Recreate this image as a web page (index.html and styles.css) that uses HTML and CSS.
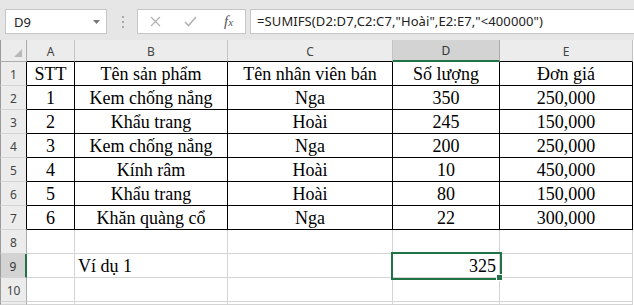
FILE: index.html
```html
<!DOCTYPE html>
<html lang="vi">
<head>
    <meta charset="UTF-8">
    <title>SUMIFS - Ví dụ 1</title>
    <link rel="stylesheet" href="styles.css">
</head>
<body>

    <!-- Name box + formula bar -->
    <div class="formula-bar">
        <div class="name-box">
            <span>D9</span>
            <svg width="7" height="4" viewBox="0 0 7 4"><path d="M0 0H7L3.5 4Z" fill="#777"/></svg>
        </div>
        <div class="grip"><i></i><i></i><i></i></div>
        <div class="fx-box">
            <span class="fx-btn">
                <svg width="11" height="11" viewBox="0 0 11 11"><path d="M1 1L10 10M10 1L1 10" stroke="#b3b3b3" stroke-width="1.3" fill="none"/></svg>
            </span>
            <span class="fx-btn">
                <svg width="13" height="11" viewBox="0 0 13 11"><path d="M1 6L4.5 9.5L12 1" stroke="#b3b3b3" stroke-width="1.6" fill="none"/></svg>
            </span>
            <span class="fx-btn fx-label">f<sub>x</sub></span>
        </div>
        <div class="formula-input">=SUMIFS(D2:D7,C2:C7,"Hoài",E2:E7,"&lt;400000")</div>
    </div>

    <!-- Sheet grid -->
    <div class="sheet">
        <div class="corner">
            <svg width="8" height="8" viewBox="0 0 8 8"><path d="M8 0V8H0Z" fill="#b9b9b9"/></svg>
        </div>
        <div class="hd">A</div>
        <div class="hd">B</div>
        <div class="hd">C</div>
        <div class="hd on">D</div>
        <div class="hd">E</div>

        <div class="rh t">1</div>
        <div class="c t">STT</div>
        <div class="c t">Tên sản phẩm</div>
        <div class="c t">Tên nhân viên bán</div>
        <div class="c t">Số lượng</div>
        <div class="c t">Đơn giá</div>

        <div class="rh t">2</div>
        <div class="c t">1</div>
        <div class="c t">Kem chống nắng</div>
        <div class="c t">Nga</div>
        <div class="c t">350</div>
        <div class="c t">250,000</div>

        <div class="rh t">3</div>
        <div class="c t">2</div>
        <div class="c t">Khẩu trang</div>
        <div class="c t">Hoài</div>
        <div class="c t">245</div>
        <div class="c t">150,000</div>

        <div class="rh t">4</div>
        <div class="c t">3</div>
        <div class="c t">Kem chống nắng</div>
        <div class="c t">Nga</div>
        <div class="c t">200</div>
        <div class="c t">250,000</div>

        <div class="rh t">5</div>
        <div class="c t">4</div>
        <div class="c t">Kính râm</div>
        <div class="c t">Hoài</div>
        <div class="c t">10</div>
        <div class="c t">450,000</div>

        <div class="rh t">6</div>
        <div class="c t">5</div>
        <div class="c t">Khẩu trang</div>
        <div class="c t">Hoài</div>
        <div class="c t">80</div>
        <div class="c t">150,000</div>

        <div class="rh t">7</div>
        <div class="c t">6</div>
        <div class="c t">Khăn quàng cổ</div>
        <div class="c t">Nga</div>
        <div class="c t">22</div>
        <div class="c t">300,000</div>

        <div class="rh">8</div>
        <div class="c"></div>
        <div class="c"></div>
        <div class="c"></div>
        <div class="c"></div>
        <div class="c"></div>

        <div class="rh on">9</div>
        <div class="c"></div>
        <div class="c left">Ví dụ 1</div>
        <div class="c"></div>
        <div class="c right sel">325</div>
        <div class="c"></div>

        <div class="rh">10</div>
        <div class="c"></div>
        <div class="c"></div>
        <div class="c"></div>
        <div class="c"></div>
        <div class="c"></div>

        <!-- row 11, only its top edge shows -->
        <div class="rh"></div>
        <div class="c"></div>
        <div class="c"></div>
        <div class="c"></div>
        <div class="c"></div>
        <div class="c"></div>
    </div>

</body>
</html>
```

FILE: styles.css
```css
/* Page */
body {
    margin: 0;
    width: 634px;
    height: 305px;
    overflow: hidden;
    background: #fff;
    font-family: "Noto Sans", "Open Sans", sans-serif;
}

/* Formula bar */
.formula-bar {
    display: flex;
    align-items: center;
    height: 40px;
    box-sizing: border-box;
    padding: 9px 0 6px 5px;
    background: #e6e6e6;
    overflow: hidden;
}

.name-box {
    display: flex;
    align-items: center;
    justify-content: space-between;
    width: 102px;
    height: 25px;
    box-sizing: border-box;
    padding: 0 6px 0 8px;
    background: #fff;
    border: 1px solid #c6c6c6;
    font-size: 13px;
    color: #222;
}

.grip {
    display: flex;
    flex-direction: column;
    gap: 3px;
    margin: 0 13px 0 15px;
}

.grip i {
    display: block;
    width: 2px;
    height: 2px;
    background: #aaa;
}

.fx-box {
    display: flex;
    align-items: center;
    width: 109px;
    height: 25px;
    box-sizing: border-box;
    background: #fff;
    border: 1px solid #c6c6c6;
}

.fx-btn {
    display: flex;
    align-items: center;
    justify-content: center;
    width: 36px;
    height: 100%;
}

.fx-label {
    width: 38px;
    padding-left: 4px;
    box-sizing: border-box;
    font-family: "Liberation Serif", serif;
    font-style: italic;
    font-size: 15px;
    color: #555;
}

.fx-label sub {
    font-size: 11px;
    vertical-align: -1px;
}

.formula-input {
    flex: 1;
    height: 25px;
    box-sizing: border-box;
    margin-left: 4px;
    margin-right: -4px;
    padding-left: 6px;
    background: #fff;
    border: 1px solid #c6c6c6;
    font-size: 13px;
    letter-spacing: 0.1px;
    line-height: 23px;
    color: #222;
    white-space: nowrap;
}

/* Sheet */
.sheet {
    display: grid;
    grid-template-columns: 27px 48px 153px 165px 107px 133px;
    grid-template-rows: 22px repeat(10, 24px) 3px;
}

.sheet > div {
    box-sizing: border-box;
    display: flex;
    align-items: center;
    justify-content: center;
    white-space: nowrap;
    overflow: hidden;
}

.corner {
    background: #ececec;
    border-right: 1px solid #ababab;
    border-bottom: 1px solid #ababab;
    border-left: 1px solid #9a9a9a;
    align-items: flex-end !important;
    justify-content: flex-end !important;
    padding: 0 4px 4px 0;
}

.hd {
    background: #ececec;
    border-right: 1px solid #c3c3c3;
    border-bottom: 1px solid #000;
    font-size: 12px;
    color: #444;
    padding-top: 1px;
}

.hd.on {
    background: #d3d3d3;
    color: #333;
    border-bottom: 2px solid #217346;
    border-right-color: #ababab;
}

.rh {
    background: #ececec;
    border-left: 1px solid #9a9a9a;
    border-right: 1px solid #ababab;
    border-bottom: 1px solid #d4d4d4;
    font-size: 12px;
    color: #444;
    padding-top: 2px;
}

.rh.t {
    border-right-color: #000;
}

.rh.on {
    background: #d3d3d3;
    border-right: 2px solid #217346;
    color: #333;
}

/* Cells */
.c {
    border-right: 1px solid #d4d4d4;
    border-bottom: 1px solid #d4d4d4;
    font-family: "Liberation Serif", serif;
    font-size: 18px;
    color: #000;
    padding-top: 2px;
}

.c.t {
    border-right-color: #000;
    border-bottom-color: #000;
}

.c.left {
    justify-content: flex-start !important;
    padding-left: 3px;
}

.c.right {
    justify-content: flex-end !important;
    padding-right: 3px;
}

/* Active cell */
.sel {
    position: relative;
    overflow: visible !important;
    outline: 2px solid #217346;
    z-index: 2;
}

.sel::after {
    content: "";
    position: absolute;
    right: -4px;
    bottom: -4px;
    width: 5px;
    height: 5px;
    background: #217346;
    border: 1px solid #fff;
}
```
